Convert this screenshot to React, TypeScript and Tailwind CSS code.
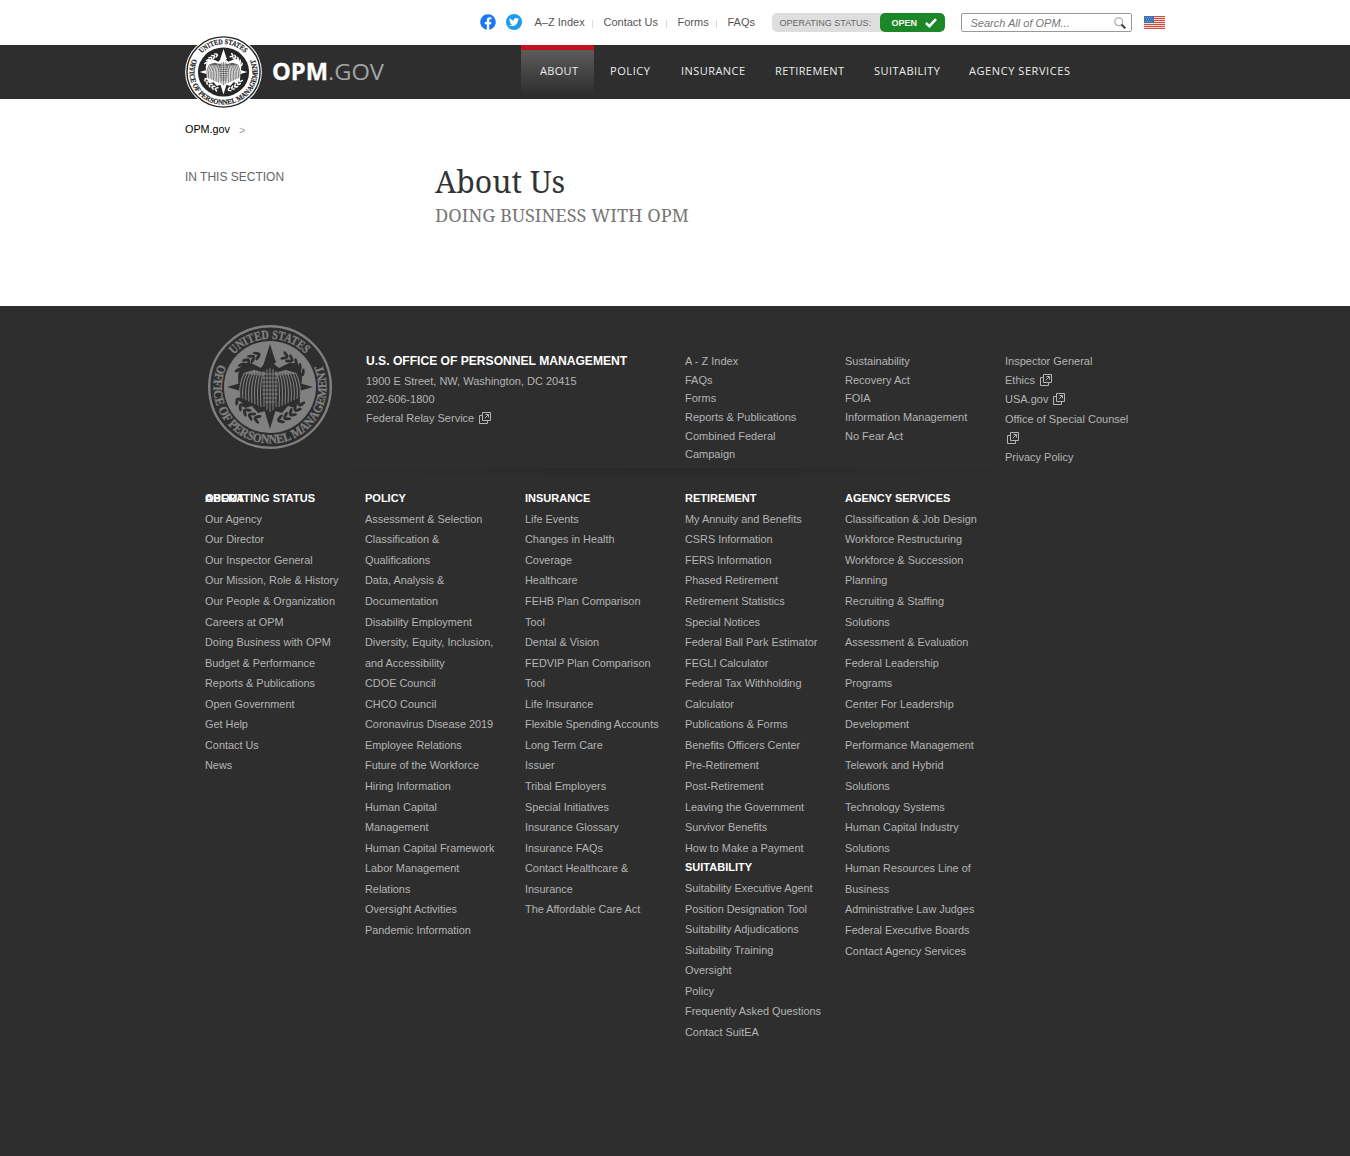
import React from "react";
import { FaFacebook, FaTwitter } from "react-icons/fa";

const leaves = [-64, -54, -44, -34, -24, 24, 34, 44, 54, 64, 116, 127, 138, 149, 160, 200, 211, 222, 233, 244];

function Seal({ width, height, ink, ground, id, inner }: { width: number; height: number; ink: string; ground: string; id: string; inner: number }) {
  return (
    <svg width={width} height={height} viewBox="-64 -64 128 128" preserveAspectRatio="none" aria-hidden="true">
      <defs>
        <path id={id + "t"} d="M-36 -32.2A48.3 48.3 0 0 1 36 -32.2" />
        <path id={id + "b"} d="M-51.5 -22.9A56.4 56.4 0 1 0 51.5 -22.9" />
      </defs>
      <circle r="63.8" fill={ground} />
      <circle r="60.8" fill="none" stroke={ink} strokeWidth="2.4" />
      <circle r={inner} fill={ink} />
      <g fill={ink} stroke={ink} strokeWidth=".35" fontFamily="Liberation Serif, serif" fontWeight="700" fontSize="12.6">
        <text>
          <textPath href={"#" + id + "t"} textLength="80" lengthAdjust="spacingAndGlyphs">UNITED STATES</textPath>
        </text>
        <text>
          <textPath href={"#" + id + "b"} textLength="223" lengthAdjust="spacingAndGlyphs">OFFICE OF PERSONNEL MANAGEMENT</textPath>
        </text>
      </g>
      <g transform={`scale(${inner / 46})`}>
        <g fill={ground}>
          <path d="M0 -43L6 -24L-6 -24ZM0 42L6 22L-6 22ZM-43 0L-26 -5L-26 5ZM43 0L26 -5L26 5Z" />
          {leaves.map((a) => (
            <g key={a} transform={`rotate(${a}) translate(0 -34)`}>
              <ellipse rx="3.8" ry="1.5" transform="rotate(32)" cy="-2.6" />
              <ellipse rx="3.8" ry="1.5" transform="rotate(-32)" cy="2.2" />
            </g>
          ))}
          <path d="M-5 -25Q0 -31 6 -26L4 -23L9 -19L19 -24H27Q32 -17 32 -9L30 12L25 21L18 19L12 26L5 24L0 29L-5 24L-12 26L-18 19L-25 21L-30 12L-32 -9Q-32 -17 -27 -24H-19L-9 -19Z" />
        </g>
        <g fill="none" stroke={ink} strokeWidth="1.1">
          {[9, 12, 15, 18, 21, 24, 27, 30].map((r) => (
            <path key={r} d={`M${-r} ${24 - r * 0.45}Q${-r - 1.5} -2 ${-r * 0.86} ${-10 - r * 0.12}L${-r * 0.5} ${-13 - r * 0.12}M${r} ${24 - r * 0.45}Q${r + 1.5} -2 ${r * 0.86} ${-10 - r * 0.12}L${r * 0.5} ${-13 - r * 0.12}`} />
          ))}
          <path d="M-6 -16V20M-3 -18V23M0 -19V25M3 -18V23M6 -16V20" strokeWidth="1" />
          <path d="M-8 -13H8M-8 -9H8M-8 -5H8M-8 -1H8M-8 3H8M-8 7H8M-7 11H7M-5 15H5" strokeWidth=".9" />
        </g>
      </g>
    </svg>
  );
}

function External() {
  return (
    <svg className="ml-[5px] inline-block align-[-2px]" width="12" height="12" viewBox="0 0 12 12" fill="none" stroke="#b4b4b4">
      <path d="M3.5 .5H11.5V8.5H3.5ZM3.5 3.5H.5V11.5H8.5V8.5M5.8 6.2L9.2 2.8M6.5 2.5H9.5V5.5" />
    </svg>
  );
}

function Flag() {
  return (
    <svg width="21" height="13" viewBox="0 0 21 13">
      <path fill="#f4dcd8" d="M0 0H21V13H0Z" />
      <path stroke="#d04a3c" d="M0 .5H21M0 2.5H21M0 4.5H21M0 6.5H21M0 8.5H21M0 10.5H21M0 12.5H21" />
      <path fill="#3f73ad" d="M0 0H10V7H0Z" />
      <path stroke="#6f9dca" strokeDasharray="1 1" d="M1 1.5H9M2 3.5H9M1 5.5H9" />
    </svg>
  );
}

const nav = [
  { label: "POLICY", box: "w-[71px]", text: 40 },
  { label: "INSURANCE", box: "w-[95px]", text: 64 },
  { label: "RETIREMENT", box: "w-[99px]", text: 69 },
  { label: "SUITABILITY", box: "w-[95px]", text: 66 },
  { label: "AGENCY SERVICES", box: "w-[130px]", text: 101 },
];

const quickA = ["A - Z Index", "FAQs", "Forms", "Reports & Publications", "Combined Federal\nCampaign"];
const quickB = ["Sustainability", "Recovery Act", "FOIA", "Information Management", "No Fear Act"];

const about = ["Our Agency", "Our Director", "Our Inspector General", "Our Mission, Role & History", "Our People & Organization", "Careers at OPM", "Doing Business with OPM", "Budget & Performance", "Reports & Publications", "Open Government", "Get Help", "Contact Us", "News"];
const policy = ["Assessment & Selection", "Classification &\nQualifications", "Data, Analysis &\nDocumentation", "Disability Employment", "Diversity, Equity, Inclusion,\nand Accessibility", "CDOE Council", "CHCO Council", "Coronavirus Disease 2019", "Employee Relations", "Future of the Workforce", "Hiring Information", "Human Capital\nManagement", "Human Capital Framework", "Labor Management\nRelations", "Oversight Activities", "Pandemic Information"];
const insurance = ["Life Events", "Changes in Health\nCoverage", "Healthcare", "FEHB Plan Comparison\nTool", "Dental & Vision", "FEDVIP Plan Comparison\nTool", "Life Insurance", "Flexible Spending Accounts", "Long Term Care", "Issuer", "Tribal Employers", "Special Initiatives", "Insurance Glossary", "Insurance FAQs", "Contact Healthcare &\nInsurance", "The Affordable Care Act"];
const retirement = ["My Annuity and Benefits", "CSRS Information", "FERS Information", "Phased Retirement", "Retirement Statistics", "Special Notices", "Federal Ball Park Estimator", "FEGLI Calculator", "Federal Tax Withholding\nCalculator", "Publications & Forms", "Benefits Officers Center", "Pre-Retirement", "Post-Retirement", "Leaving the Government", "Survivor Benefits", "How to Make a Payment"];
const suitability = ["Suitability Executive Agent", "Position Designation Tool", "Suitability Adjudications", "Suitability Training", "Oversight", "Policy", "Frequently Asked Questions", "Contact SuitEA"];
const agency = ["Classification & Job Design", "Workforce Restructuring", "Workforce & Succession\nPlanning", "Recruiting & Staffing\nSolutions", "Assessment & Evaluation", "Federal Leadership\nPrograms", "Center For Leadership\nDevelopment", "Performance Management", "Telework and Hybrid\nSolutions", "Technology Systems", "Human Capital Industry\nSolutions", "Human Resources Line of\nBusiness", "Administrative Law Judges", "Federal Executive Boards", "Contact Agency Services"];

function Links({ title, items }: { title: string; items: string[] }) {
  return (
    <div>
      <h3 className="h-[18px] text-[11px] leading-[18px] font-bold text-white">{title}</h3>
      <ul className="pt-[1.7px] text-[10.88px] leading-[20.56px]">
        {items.map((t) => (
          <li key={t} className="whitespace-pre">{t}</li>
        ))}
      </ul>
    </div>
  );
}

function NavText({ label, width }: { label: string; width: number }) {
  return (
    <svg width={width} height="16" className="overflow-visible">
      <text x="0" y="12" fill="#ececec" fontFamily="Open Sans, Noto Sans, sans-serif" fontWeight="400" fontSize="11" textLength={width}>{label}</text>
    </svg>
  );
}

export default function App() {
  return (
    <div className="min-h-[1156px] w-[1350px] bg-white text-[11px] [font-family:'Liberation_Sans',Arial,sans-serif]">
      <div className="mx-auto flex h-[45px] w-[981px] items-start pl-[295px] text-[#555]">
        <FaFacebook size={16} color="#1877f2" className="mt-[14px]" />
        <span className="mt-[14px] ml-[10px] grid size-4 place-items-center rounded-full bg-[#1d9bf0]">
          <FaTwitter size={10} color="#fff" />
        </span>
        <nav className="mt-[14px] ml-[13px] flex h-4 leading-4 whitespace-nowrap">
          <span className="w-[58px]">A–Z Index</span>
          <span className="mt-1.5 mr-[11px] -ml-px h-2 w-px bg-[#ddd]" />
          <span className="w-[63px]">Contact Us</span>
          <span className="mt-1.5 mr-[11px] -ml-px h-2 w-px bg-[#ddd]" />
          <span className="w-[39px]">Forms</span>
          <span className="mt-1.5 mr-[11px] -ml-px h-2 w-px bg-[#ddd]" />
          <span className="w-[44px]">FAQs</span>
        </nav>
        <div className="mt-[13px] flex h-[19px] w-[173px] shrink-0 overflow-hidden rounded-[5px] bg-[#dedede] text-[9px] leading-[20px]">
          <span className="w-[108px] pl-2 whitespace-nowrap text-[#666]">OPERATING STATUS:</span>
          <span className="flex flex-1 items-center rounded-[5px] bg-[#1b8726] pl-3 font-bold text-white">
            OPEN
            <svg className="ml-2" width="12" height="10" viewBox="0 0 12 10" fill="none" stroke="#fff" strokeWidth="2.6"><path d="M1 5L4.4 8.2L11 1.2" /></svg>
          </span>
        </div>
        <div className="mt-[13px] ml-4 flex h-[19px] w-[171px] shrink-0 items-center justify-between rounded-[2px] border border-[#999] pt-px pr-[5px] pl-[9px] text-[#777] italic">
          Search All of OPM...
          <svg width="12" height="12" viewBox="0 0 12 12" fill="none"><circle cx="4.7" cy="4.7" r="3.9" stroke="#aaa" strokeWidth="1.2" /><path d="M7.5 7.5L11.3 11.3" stroke="#444" strokeWidth="2.2" /></svg>
        </div>
        <div className="mt-4 ml-3 shrink-0"><Flag /></div>
      </div>

      <header className="h-[54px] bg-[#2e2e2e]">
        <div className="mx-auto flex h-[54px] w-[980px]">
          <div className="-mt-[10px] h-[74px] w-[77px] shrink-0"><Seal width={77} height={74} inner={42.5} ink="#262626" ground="#fff" id="head" /></div>
          <svg className="ml-[9px] shrink-0" width="120" height="54" fontFamily="Open Sans, sans-serif" fontSize="22.5">
            <text x="1" y="35" fill="#fff" stroke="#fff" strokeWidth=".3" fontWeight="700" textLength="56" lengthAdjust="spacingAndGlyphs">OPM</text>
            <text x="57" y="35" fill="#a3a3a3" fontWeight="400" textLength="56" lengthAdjust="spacingAndGlyphs">.GOV</text>
          </svg>
          <nav className="ml-[130px] flex h-[54px] shrink-0">
            <div className="flex h-[50px] w-[73px] justify-center border-t-[5px] border-[#c2121f] bg-linear-to-b from-[#5c5c5c] to-[#2e2e2e] pt-[13px] pl-[2px]"><NavText label="ABOUT" width={38} /></div>
            {nav.map((n) => (
              <div key={n.label} className={"flex justify-center pt-[18px] " + n.box}><NavText label={n.label} width={n.text} /></div>
            ))}
          </nav>
        </div>
      </header>

      <main className="mx-auto h-[207px] w-[980px] pt-[22px]">
        <div className="flex h-4 items-center text-[10.8px] text-black">OPM.gov<span className="mt-[3px] ml-[9px] text-[#999]">&gt;</span></div>
        <div className="flex">
          <aside className="w-[250px] pt-[32px] text-[12px] leading-4 text-[#666]">IN THIS SECTION</aside>
          <section className="pt-[22px] [font-family:'Noto_Serif','Droid_Serif','DejaVu_Serif',serif]">
            <h1 className="text-[30.2px] leading-[46px] text-[#333]">About Us</h1>
            <h2 className="-mt-px text-[18.2px] leading-[22px] text-[#777]">DOING BUSINESS WITH OPM</h2>
          </section>
        </div>
      </main>

      <footer className="h-[850px] bg-[#2e2e2e] text-[#b4b4b4]">
        <div className="mx-auto w-[980px] pl-5">
          <div className="flex h-[162px] pt-[16px]">
            <div className="w-[161px] pt-px pl-[1px]"><Seal width={128} height={128} inner={46} ink="#808080" ground="#2e2e2e" id="foot" /></div>
            <address className="w-[319px] pt-[30px] leading-[18.6px] not-italic">
              <h3 className="mb-[1px] text-[12.1px] font-bold text-white">U.S. OFFICE OF PERSONNEL MANAGEMENT</h3>
              <p>1900 E Street, NW, Washington, DC 20415</p>
              <p>202-606-1800</p>
              <p>Federal Relay Service<External /></p>
            </address>
            <ul className="w-40 pt-[30px] leading-[18.65px]">{quickA.map((t) => <li key={t} className="whitespace-pre">{t}</li>)}</ul>
            <ul className="w-40 pt-[30px] leading-[18.65px]">{quickB.map((t) => <li key={t} className="whitespace-pre">{t}</li>)}</ul>
            <ul className="w-[140px] pt-[30px] leading-[19.2px] whitespace-nowrap">
              <li className="h-[19.2px]">Inspector General</li>
              <li className="h-[19.2px]">Ethics<External /></li>
              <li className="h-[19.2px]">USA.gov<External /></li>
              <li className="h-[19.2px]">Office of Special Counsel</li>
              <li className="-ml-[3px] h-[19.2px]"><External /></li>
              <li className="h-[19.2px]">Privacy Policy</li>
            </ul>
          </div>
          <div className="ml-6 h-[12px] w-[886px] bg-[radial-gradient(ellipse_at_top,#292929,#2e2e2e_70%)]" />
          <div className="grid grid-cols-[160px_160px_160px_160px_160px] pt-[9px]">
            <div className="relative">
              <Links title="ABOUT" items={about} />
              <h3 className="absolute top-0 left-0 text-[11px] leading-[18px] font-bold whitespace-nowrap text-white">OPERATING STATUS</h3>
            </div>
            <Links title="POLICY" items={policy} />
            <Links title="INSURANCE" items={insurance} />
            <div>
              <Links title="RETIREMENT" items={retirement} />
              <Links title="SUITABILITY" items={suitability} />
            </div>
            <Links title="AGENCY SERVICES" items={agency} />
          </div>
        </div>
      </footer>
    </div>
  );
}
